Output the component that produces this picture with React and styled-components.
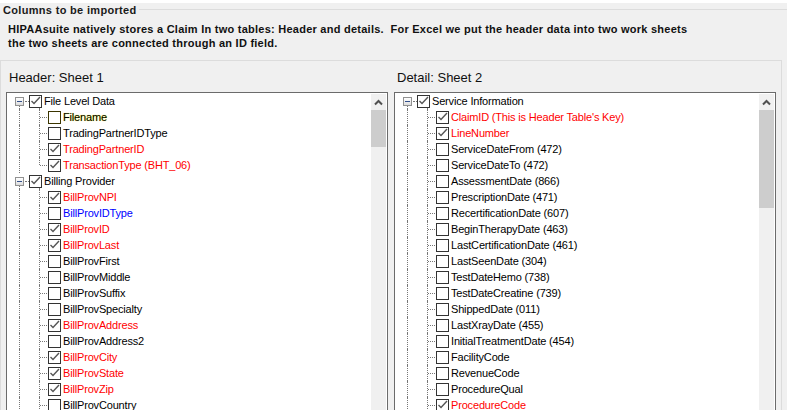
import React from "react";
import styled, { createGlobalStyle } from "styled-components";

const Global = createGlobalStyle`
  html, body { margin: 0; padding: 0; background: #f0f0f0; }
  body { width: 787px; height: 410px; overflow: hidden; font-family: "Liberation Sans", Arial, sans-serif; }
`;
const Page = styled.div`
  width: 787px; height: 410px; overflow: hidden; background: #f0f0f0; border-top: 3px solid #fff; box-sizing: border-box;
`;
const GroupTitleRow = styled.div`
  display: flex; align-items: center; height: 13px; padding-left: 3px; gap: 2px;
`;
const GroupTitle = styled.span`
  font-size: 11px; font-weight: bold; color: #1a1a1a; letter-spacing: .32px; white-space: nowrap;
`;
const GroupRule = styled.div`
  flex: 1; height: 1px; background: #dcdcdc;
`;
const Intro = styled.p`
  margin: 6px 0 0; padding-left: 8px; height: 30px; font-size: 11px; line-height: 14px; font-weight: bold; color: #111; white-space: pre; letter-spacing: .25px;
`;
const Panel = styled.div`
  margin-top: 8px; margin-right: 5px; border: 1px solid #dcdcdc; height: 360px; padding: 0 0 0 5px; display: flex; gap: 6px;
`;
const Column = styled.div`
  width: 382px; display: flex; flex-direction: column;
`;
const Heading = styled.h3`
  margin: 0; height: 31px; padding: 9px 0 0 3px; box-sizing: border-box; font-size: 13px; line-height: 15px; font-weight: normal; color: #111;
`;
const TreeBox = styled.div`
  flex: 1; display: flex; background: #fff; border: 1px solid #6b6b6b; min-height: 0;
`;
const Tree = styled.div`
  flex: 1; overflow: hidden; position: relative;
`;
const Row = styled.div`
  height: 16px; display: flex; align-items: center; position: relative; padding-left: ${p => (p.$root ? 22 : 41)}px;
`;
const VGuide = styled.i`
  position: absolute; left: ${p => p.$x}px; top: ${p => p.$top}px; bottom: ${p => p.$bottom}px; border-left: 1px dotted #777;
`;
const HGuide = styled.i`
  position: absolute; left: ${p => p.$x}px; width: ${p => p.$w}px; top: 8px; border-top: 1px dotted #777;
`;
const Expander = styled.span`
  position: absolute; left: 8px; top: 4px; width: 9px; height: 9px; box-sizing: border-box; background: linear-gradient(#fff, #ddd); border: 1px solid #919191;
  &::after { content: ""; position: absolute; left: 1px; right: 1px; top: 3px; height: 1px; background: #33508c; }
`;
const Check = styled.span`
  width: 13px; height: 13px; flex: none; box-sizing: border-box; border: 1px solid ${p => (p.$hl ? "#3b3500" : "#333")}; background: #fff; display: flex; z-index: 1;
`;
const Label = styled.span`
  margin-left: 2px; font-size: 11px; line-height: 14px; color: ${p => p.$c}; white-space: nowrap; letter-spacing: -.17px;
  text-shadow: ${p => (p.$hl ? "0 0 1px #e8e800" : "none")};
`;
const Bar = styled.div`
  width: 15px; margin: 1px; flex: none; display: flex; flex-direction: column; background: #f0f0f0;
`;
const Arrow = styled.div`
  height: 16px; display: flex; align-items: center; justify-content: center;
`;
const Thumb = styled.div`
  height: ${p => p.$h}px; background: #cdcdcd;
`;

const Tick = () => (
  <svg width="11" height="11" viewBox="0 0 11 11"><path d="M1.5 5 L4 7.5 L10 1" fill="none" stroke="#555" strokeWidth="1.4" /></svg>
);
const Up = () => (
  <svg width="9" height="7" viewBox="0 0 9 7"><path d="M1 5.5 L4.5 2 L8 5.5" fill="none" stroke="#505050" strokeWidth="2" /></svg>
);

const R = "#ff0000", K = "#000", B = "#0000ff";
const item = (text, color, checked, root = false, hl = false) => ({ text, color, checked, root, hl });
const left = [
  item("File Level Data", K, true, true),
  item("Filename", K, false, false, true),
  item("TradingPartnerIDType", K, false),
  item("TradingPartnerID", R, true),
  item("TransactionType (BHT_06)", R, true),
  item("Billing Provider", K, true, true),
  item("BillProvNPI", R, true),
  item("BillProvIDType", B, false),
  item("BillProvID", R, true),
  item("BillProvLast", R, true),
  item("BillProvFirst", K, false),
  item("BillProvMiddle", K, false),
  item("BillProvSuffix", K, false),
  item("BillProvSpecialty", K, false),
  item("BillProvAddress", R, true),
  item("BillProvAddress2", K, false),
  item("BillProvCity", R, true),
  item("BillProvState", R, true),
  item("BillProvZip", R, true),
  item("BillProvCountry", K, false),
];
const right = [
  item("Service Information", K, true, true),
  item("ClaimID (This is Header Table's Key)", R, true),
  item("LineNumber", R, true),
  item("ServiceDateFrom (472)", K, false),
  item("ServiceDateTo (472)", K, false),
  item("AssessmentDate (866)", K, false),
  item("PrescriptionDate (471)", K, false),
  item("RecertificationDate (607)", K, false),
  item("BeginTherapyDate (463)", K, false),
  item("LastCertificationDate (461)", K, false),
  item("LastSeenDate (304)", K, false),
  item("TestDateHemo (738)", K, false),
  item("TestDateCreatine (739)", K, false),
  item("ShippedDate (011)", K, false),
  item("LastXrayDate (455)", K, false),
  item("InitialTreatmentDate (454)", K, false),
  item("FacilityCode", K, false),
  item("RevenueCode", K, false),
  item("ProcedureQual", K, false),
  item("ProcedureCode", R, true),
];

function TreeList({ items, thumb }) {
  return (
    <TreeBox>
      <Tree>
        {items.map(({ text, color, checked, root, hl }, i) => {
          const lastChild = items[i + 1] && items[i + 1].root;
          return (
            <Row key={i} $root={root}>
              {root ? (
                <>
                  <Expander />
                  <HGuide $x={18} $w={4} />
                  <VGuide $x={32} $top={14} $bottom={-2} />
                </>
              ) : (
                <>
                  <VGuide $x={32} $top={0} $bottom={lastChild ? 8 : 0} />
                  <HGuide $x={33} $w={7} />
                </>
              )}
              <VGuide $x={12} $top={root ? 13 : 0} $bottom={0} />
              <Check $hl={hl}>{checked ? <Tick /> : null}</Check>
              <Label $c={color} $hl={hl}>{text}</Label>
            </Row>
          );
        })}
      </Tree>
      <Bar>
        <Arrow><Up /></Arrow>
        <Thumb $h={thumb} />
      </Bar>
    </TreeBox>
  );
}

export default function App() {
  return (
    <Page>
      <Global />
      <GroupTitleRow>
        <GroupTitle>Columns to be imported</GroupTitle>
        <GroupRule />
      </GroupTitleRow>
      <Intro>{"HIPAAsuite natively stores a Claim In two tables: Header and details.  For Excel we put the header data into two work sheets\nthe two sheets are connected through an ID field."}</Intro>
      <Panel>
        <Column>
          <Heading>Header: Sheet 1</Heading>
          <TreeList items={left} thumb={37} />
        </Column>
        <Column>
          <Heading>Detail: Sheet 2</Heading>
          <TreeList items={right} thumb={98} />
        </Column>
      </Panel>
    </Page>
  );
}
